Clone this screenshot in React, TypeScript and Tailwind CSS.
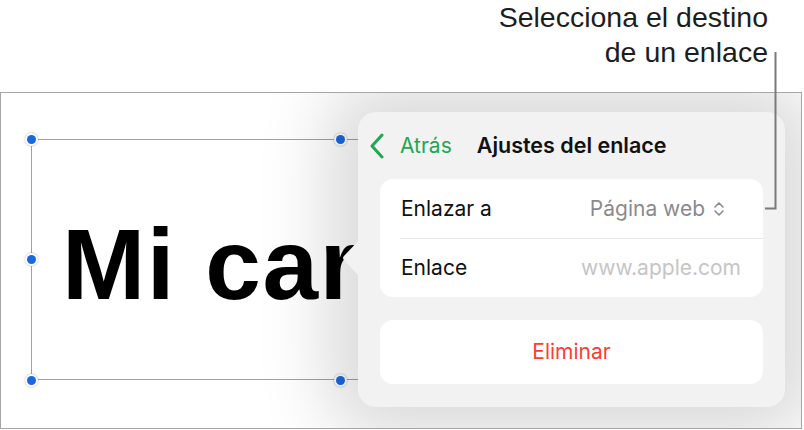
import React from 'react';

const Handle: React.FC<{ className: string }> = ({ className }) => (
  <div
    className={`absolute w-[13px] h-[13px] -ml-[6.5px] -mt-[6.5px] rounded-full bg-white shadow-[0_0_2px_rgba(0,0,0,0.35)] flex items-center justify-center ${className}`}
  >
    <div className="w-[9px] h-[9px] rounded-full bg-[#1769e0]" />
  </div>
);

const App: React.FC = () => {
  return (
    <div className="relative w-[804px] h-[430px] bg-white overflow-hidden font-['Liberation_Sans',sans-serif]">
      {/* Callout */}
      <div className="h-[92px] flex justify-end pr-[36px]">
        <p className="text-right text-[28.5px] leading-[35px] text-[#1d1d1d]">
          Selecciona el destino
          <br />
          de un enlace
        </p>
      </div>
      <svg className="absolute left-0 top-0 z-20" width="804" height="430">
        <path d="M775.5 52 V208.5 H765" fill="none" stroke="#7a7a7a" strokeWidth="2" />
      </svg>

      {/* Canvas */}
      <div className="relative w-[802px] h-[337px] border border-[#a6a6a6] bg-white overflow-hidden">
        {/* Selected text box */}
        <div className="absolute left-[30px] top-[46px] w-[619px] h-[241px] border border-[#7ea4f0]">
          <p className="pl-[30px] pt-[54px] text-[100px] leading-[140px] font-bold text-black whitespace-nowrap tracking-[1.5px]">
            Mi car
          </p>
        </div>
        <Handle className="left-[30.5px] top-[46.5px]" />
        <Handle className="left-[339.5px] top-[46.5px]" />
        <Handle className="left-[30.5px] top-[166.5px]" />
        <Handle className="left-[30.5px] top-[287.5px]" />
        <Handle className="left-[339.5px] top-[287.5px]" />

        {/* Popover */}
        <div className="absolute left-[357px] top-[19px] w-[427px] h-[295px] rounded-[18px] bg-[#f2f2f2] shadow-[0_0_70px_30px_rgba(0,0,0,0.15)] font-['Inter',sans-serif] flex flex-col px-[22px] pb-[23px]">
          <svg className="absolute -left-[16px] top-[127px]" width="18" height="38" viewBox="0 0 18 38">
            <path d="M18 0 L2 17 Q0 19 2 21 L18 38 Z" fill="#f2f2f2" />
          </svg>
          <div className="h-[67px] flex items-center -ml-[11px]">
            <svg width="16" height="26" viewBox="0 0 16 26" className="mr-[15px]">
              <path d="M13 2 L3 13 L13 24" fill="none" stroke="#22a651" strokeWidth="3" strokeLinecap="round" strokeLinejoin="round" />
            </svg>
            <span className="text-[21px] text-[#22a651]">Atrás</span>
            <span className="ml-[25px] text-[21.5px] font-semibold text-[#111]">Ajustes del enlace</span>
          </div>
          <div className="rounded-[13px] bg-white flex flex-col">
            <div className="h-[59px] flex items-center justify-between pl-[21px] pr-[38px]">
              <span className="text-[21px] text-[#111]">Enlazar a</span>
              <span className="flex items-center gap-[8px] text-[21px] text-[#8a8a8e]">
                Página web
                <svg width="12" height="18" viewBox="0 0 12 18">
                  <path d="M2 7 L6 3 L10 7 M2 11 L6 15 L10 11" fill="none" stroke="#8a8a8e" strokeWidth="1.6" strokeLinecap="round" strokeLinejoin="round" />
                </svg>
              </span>
            </div>
            <div className="ml-[20px] h-px bg-[#e6e6e6]" />
            <div className="h-[58px] flex items-center justify-between pl-[21px] pr-[22px]">
              <span className="text-[21px] text-[#111]">Enlace</span>
              <span className="text-[21px] text-[#c5c5c7]">www.apple.com</span>
            </div>
          </div>
          <div className="mt-[23px] h-[64px] rounded-[13px] bg-white flex items-center justify-center">
            <span className="text-[21px] text-[#ff3b30]">Eliminar</span>
          </div>
        </div>
      </div>
    </div>
  );
};

export default App;
